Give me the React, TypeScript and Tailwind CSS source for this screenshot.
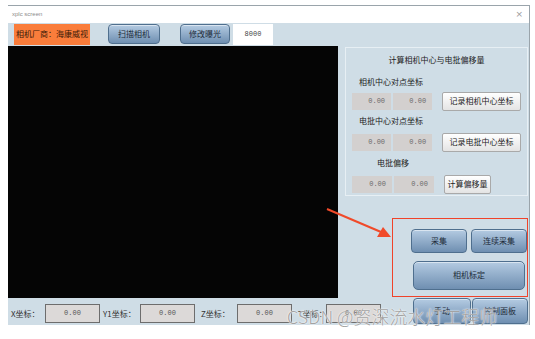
import React from 'react';

const cjk = { fontFamily: '"Noto Sans CJK SC", "Noto Sans", sans-serif' };
const mono = { fontFamily: '"Liberation Mono", "DejaVu Sans Mono", monospace' };

const BlueButton = ({ label, className = '' }: { label: string; className?: string }) => (
  <button
    className={`flex items-center justify-center whitespace-nowrap rounded-[4px] border border-[#4f6f8e] bg-gradient-to-b from-[#b4cbe2] to-[#6f8fb1] text-[8px] text-[#1c2a38] shadow-[inset_0_1px_0_rgba(255,255,255,0.5)] ${className}`}
    style={cjk}
  >
    {label}
  </button>
);

const WhiteButton = ({ label, className = '' }: { label: string; className?: string }) => (
  <button
    className={`flex items-center justify-center whitespace-nowrap rounded-[2px] border border-[#a9a9a9] bg-gradient-to-b from-[#ffffff] to-[#e4e4e4] text-[8px] text-[#222] ${className}`}
    style={cjk}
  >
    {label}
  </button>
);

const GrayBox = ({ value }: { value: string }) => (
  <div
    className="flex h-[17px] w-[40px] items-center justify-end bg-[#d3d0cf] pr-[6px] text-[7px] text-[#6b6b6b]"
    style={mono}
  >
    {value}
  </div>
);

const CoordField = ({ label, labelW }: { label: string; labelW: string }) => (
  <div className="flex items-center">
    <span className={`${labelW} whitespace-nowrap text-[8px] text-[#333]`} style={cjk}>
      {label}
    </span>
    <div
      className="flex h-[19px] w-[55px] items-center justify-center border border-[#6d6d6d] bg-[#dcd9d8] text-[7px] text-[#555]"
      style={mono}
    >
      0.00
    </div>
  </div>
);

export default function App() {
  return (
    <div className="relative h-[339px] w-[535px] overflow-hidden bg-white">
      <div className="h-[5px] w-full bg-white" />
      <div className="ml-[8px] flex h-[320px] w-[522px] flex-col border-t border-r border-[#9aa4ab] bg-[#cfdde6]">
        {/* title bar */}
        <div className="flex h-[17px] items-center justify-between bg-white pl-[4px] pr-[6px]">
          <span className="text-[6px] text-[#8c8c8c]" style={{ fontFamily: '"Liberation Sans", sans-serif' }}>
            xplc screen
          </span>
          <span className="text-[9px] leading-none text-[#9a9a9a]" style={{ fontFamily: '"DejaVu Sans", sans-serif' }}>
            ×
          </span>
        </div>

        {/* toolbar */}
        <div className="flex h-[23px] items-center pl-[6px]">
          <div className="flex h-[21px] w-[76px] items-center justify-center bg-[#fa7d3b] text-[8px] text-[#3a1a08]" style={cjk}>
            相机厂商：海康威视
          </div>
          <BlueButton label="扫描相机" className="ml-[18px] h-[20px] w-[52px]" />
          <BlueButton label="修改曝光" className="ml-[20px] h-[20px] w-[50px]" />
          <div className="ml-[3px] flex h-[21px] w-[40px] items-center justify-center bg-white text-[7px] text-[#444]" style={mono}>
            8000
          </div>
        </div>

        {/* main */}
        <div className="flex h-[253px]">
          <div className="h-full w-[330px] bg-[#050505]" />
          <div className="flex flex-1 flex-col pl-[7px] pt-[1px]">
            <div className="flex h-[149px] w-[183px] flex-col border border-[#e7eff4] px-[6px]">
              <div className="mt-[6px] text-center text-[8px] text-[#222]" style={cjk}>
                计算相机中心与电批偏移量
              </div>
              <div className="mt-[10px] pl-[7px] text-[8px] text-[#222]" style={cjk}>
                相机中心对点坐标
              </div>
              <div className="mt-[4px] flex items-center">
                <GrayBox value="0.00" />
                <div className="ml-[2px]" />
                <GrayBox value="0.00" />
                <WhiteButton label="记录相机中心坐标" className="ml-[10px] h-[19px] w-[81px]" />
              </div>
              <div className="mt-[4px] pl-[7px] text-[8px] text-[#222]" style={cjk}>
                电批中心对点坐标
              </div>
              <div className="mt-[6px] flex items-center">
                <GrayBox value="0.00" />
                <div className="ml-[2px]" />
                <GrayBox value="0.00" />
                <WhiteButton label="记录电批中心坐标" className="ml-[10px] h-[19px] w-[81px]" />
              </div>
              <div className="mt-[5px] pl-[25px] text-[8px] text-[#222]" style={cjk}>
                电批偏移
              </div>
              <div className="mt-[6px] flex items-center">
                <GrayBox value="0.00" />
                <div className="ml-[2px]" />
                <GrayBox value="0.00" />
                <WhiteButton label="计算偏移量" className="ml-[10px] h-[19px] w-[47px]" />
              </div>
            </div>

            <div className="mt-[33px] flex gap-[4px] pl-[66px]">
              <BlueButton label="采集" className="h-[24px] w-[56px]" />
              <BlueButton label="连续采集" className="h-[24px] w-[56px]" />
            </div>
            <BlueButton label="相机标定" className="ml-[68px] mt-[8px] h-[29px] w-[112px] rounded-[5px]" />
          </div>
        </div>

        {/* bottom row */}
        <div className="flex h-[27px] items-start">
          <div className="mt-[6px] flex items-center pl-[3px]">
            <CoordField label="X坐标：" labelW="w-[34px]" />
            <div className="ml-[3px]" />
            <CoordField label="Y1坐标：" labelW="w-[37px]" />
            <div className="ml-[6px]" />
            <CoordField label="Z坐标：" labelW="w-[36px]" />
            <div className="ml-[6px]" />
            <CoordField label="T坐标：" labelW="w-[28px]" />
          </div>
          <div className="ml-[32px] flex">
            <BlueButton label="手动" className="h-[26px] w-[58px]" />
            <BlueButton label="控制面板" className="ml-[1px] h-[26px] w-[56px]" />
          </div>
        </div>
      </div>

      {/* annotation: red frame */}
      <div className="absolute left-[392px] top-[218px] h-[79px] w-[136px] border-[1.5px] border-[#f0432a]" />

      {/* annotation: arrow */}
      <svg className="absolute left-0 top-0" width="535" height="339" viewBox="0 0 535 339">
        <line x1="327" y1="209" x2="381" y2="232" stroke="#f04a2a" strokeWidth="2" />
        <polygon points="391,237 377,237 383,227" fill="#f04a2a" />
      </svg>

      {/* watermark */}
      <div
        className="absolute left-[287px] top-[307px] whitespace-nowrap text-[18px] leading-none text-[#a3a3a3]"
        style={{
          fontFamily: '"Noto Sans CJK SC", "Noto Sans", sans-serif',
          fontWeight: 300,
          textShadow: '0 0 2px #fff, 0 0 1px #fff',
        }}
      >
        CSDN @资深流水灯工程师
      </div>
    </div>
  );
}
